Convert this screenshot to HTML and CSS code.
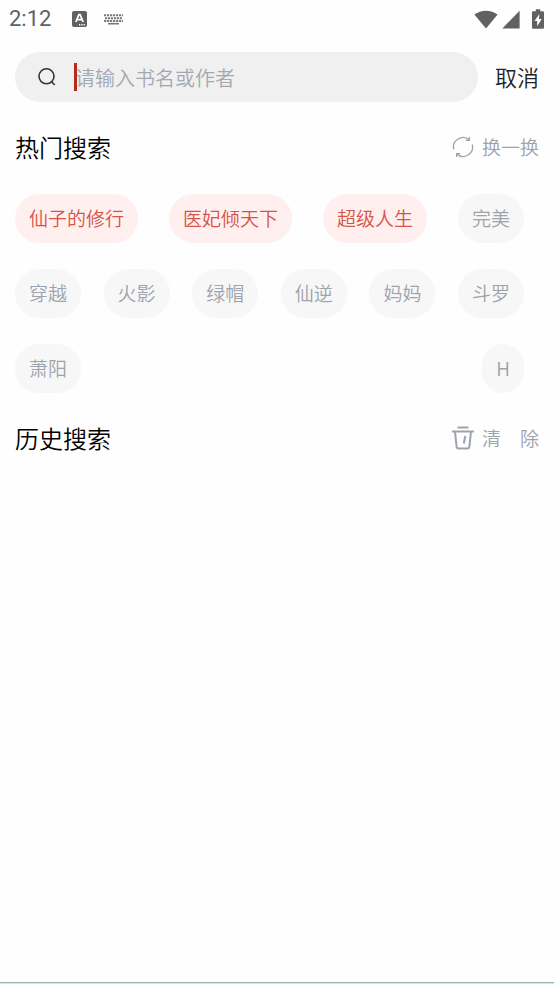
FILE: index.html
```html
<!DOCTYPE html>
<html lang="zh-CN">
<head>
<meta charset="utf-8">
<meta name="viewport" content="width=device-width, initial-scale=1">
<title>搜索</title>
<link rel="stylesheet" href="styles.css">
</head>
<body>
<div class="screen">
  <header class="status">
    <span class="time">2:12</span>
    <svg class="ime" width="15" height="16" viewBox="0 0 15 16" aria-hidden="true">
      <rect width="15" height="16" rx="2" fill="#616161"/>
      <path d="M3.8 11 6.9 3.6h1.2L11.2 11M5 8.6h5" fill="none" stroke="#fff" stroke-width="1.7"/>
      <path d="M7 13.7h1.3M9.3 13.7h1.3M11.6 13.7h1.3" stroke="#fff" stroke-width="1.4"/>
    </svg>
    <svg class="keyboard" width="19" height="11" viewBox="0 0 19 11" aria-hidden="true">
      <g stroke="#7b7b7b" stroke-width="2" fill="none" stroke-dasharray="2.2 .8">
        <path d="M0 1.2h19"/><path d="M1 4.2h17"/><path d="M0 7h19"/>
      </g>
      <path d="M4 9.7h11" stroke="#777" stroke-width="1.6"/>
    </svg>
    <span class="signals">
      <svg width="24" height="19" viewBox="0 0 24 19" aria-hidden="true"><path d="M.4 4.6C7-.7 17-.7 23.6 4.6L12 18.6z" fill="#616161"/></svg>
      <svg width="18" height="19" viewBox="0 0 18 19" aria-hidden="true"><path d="M17.6.7v17.8H.3z" fill="#616161"/></svg>
      <svg class="battery" width="12" height="20" viewBox="0 0 12 20" aria-hidden="true"><path d="M3.8.3h4.4v2H11q1 0 1 1v15.4q0 1-1 1H1q-1 0-1-1V3.300q0-1 1-1h2.800z" fill="#616161"/><path d="M7.300 5 2.500 12h2.700v5.200L9.700 10H7z" fill="#fff"/></svg>
    </span>
  </header>

  <main class="page">
    <form class="search">
      <label class="field">
        <svg width="18" height="18" viewBox="0 0 18 18" fill="none" stroke="#333" stroke-width="1.600" aria-hidden="true"><circle cx="8.500" cy="8.300" r="7.500"/><path d="m13.700 13.700 3 3.300"/></svg>
        <span class="entry">
          <input class="input" type="text" aria-label="搜索" placeholder="请输入书名或作者">
          <span class="caret"></span>
        </span>
      </label>
      <button class="cancel" type="button">取消</button>
    </form>

    <section>
      <div class="head">
        <h2 class="title">热门搜索</h2>
        <button class="action" type="button">
          <svg width="22" height="22" viewBox="0 0 22 22" fill="none" stroke="#9da3ac" stroke-width="1.300" aria-hidden="true"><path d="M1.800 13.500A9.500 9.500 0 0 1 17.300 4M17.300 1v3.300h-3.500M20.200 8.500A9.500 9.500 0 0 1 4.700 18M4.700 21v-3.300h3.500"/></svg>
          <span>换一换</span>
        </button>
      </div>
      <div class="chips">
        <button class="chip hot" type="button">仙子的修行</button>
        <button class="chip hot" type="button">医妃倾天下</button>
        <button class="chip hot" type="button">超级人生</button>
        <button class="chip" type="button">完美</button>
        <button class="chip" type="button">穿越</button>
        <button class="chip" type="button">火影</button>
        <button class="chip" type="button">绿帽</button>
        <button class="chip" type="button">仙逆</button>
        <button class="chip" type="button">妈妈</button>
        <button class="chip" type="button">斗罗</button>
        <button class="chip" type="button">萧阳</button>
        <button class="chip" type="button">H</button>
      </div>
    </section>

    <section>
      <div class="head">
        <h2 class="title">历史搜索</h2>
        <button class="action" type="button">
          <svg width="22" height="24" viewBox="0 0 22 24" fill="none" stroke="#9da3ac" stroke-width="2" aria-hidden="true"><path d="M5.500 1.500h11M0 5.500h22M3 5.500l1.600 15.200q.2 1.800 2 1.800h8.800q1.800 0 2-1.800L19 5.500M13.300 10l-1.500 7.500"/></svg>
          <span>清　除</span>
        </button>
      </div>
    </section>
  </main>
  <footer class="edge"></footer>
</div>
</body>
</html>
```

FILE: styles.css
```css
* {
  box-sizing: border-box;
}

body {
  margin: 0;
  background: #fefefe;
  font-family: "Noto Sans CJK SC", sans-serif;
  font-weight: 350;
}

button,
input {
  margin: 0;
  padding: 0;
  border: 0;
  background: none;
  font: inherit;
  color: inherit;
}

svg {
  display: block;
  flex: none;
}

.screen {
  display: flex;
  flex-direction: column;
  min-height: 100vh;
}

.status {
  display: flex;
  align-items: center;
  height: 38px;
  padding: 0 10px 0 9px;
  color: #616161;
}

.time {
  font: 400 22px/24px Roboto, sans-serif;
}

.ime {
  margin-left: 21px;
}

.keyboard {
  margin-left: 17px;
}

.signals {
  display: flex;
  align-items: center;
  gap: 4px;
  margin-left: auto;
}

.battery {
  margin-left: 8px;
}

.page {
  flex: 1;
  padding: 14px 15px 0;
}

.search {
  display: flex;
  align-items: center;
  gap: 17px;
}

.field {
  display: flex;
  flex: 1;
  align-items: center;
  gap: 18px;
  min-width: 0;
  height: 50px;
  padding: 0 23px;
  border-radius: 25px;
  background: #f0f0f0;
}

.entry {
  position: relative;
  flex: 1;
  min-width: 0;
}

.input {
  display: block;
  width: 100%;
  height: 30px;
  padding-left: 1px;
  font-size: 20px;
  color: #333;
  outline: 0;
}

.input::placeholder {
  color: #a3a8b0;
  opacity: 1;
}

.caret {
  position: absolute;
  top: 1px;
  left: 0;
  width: 3px;
  height: 28px;
  background: #b52b20;
}

.cancel {
  padding-bottom: 3px;
  font-size: 22px;
  line-height: 32px;
  color: #222;
}

.head {
  display: flex;
  align-items: center;
  justify-content: space-between;
  height: 92px;
  padding-bottom: 3px;
}

.title {
  margin: 0;
  font-size: 24px;
  font-weight: 350;
  line-height: 36px;
  color: #000;
}

.action {
  display: flex;
  align-items: center;
  gap: 8px;
  font-size: 19px;
  line-height: 28px;
  color: #9da3ac;
}

.chips {
  display: flex;
  flex-wrap: wrap;
  justify-content: space-between;
  gap: 26px 16px;
  margin-right: 15px;
}

.chip {
  height: 49px;
  padding: 0 14px 1px;
  border-radius: 25px;
  background: #f7f7f7;
  font-size: 19px;
  line-height: 28px;
  color: #9da3ac;
}

.hot {
  background: #fff0ef;
  color: #d65347;
}

.edge {
  height: 2px;
  border-top: 1px solid #9db5b5;
  background: #d5e5e4;
}
```
